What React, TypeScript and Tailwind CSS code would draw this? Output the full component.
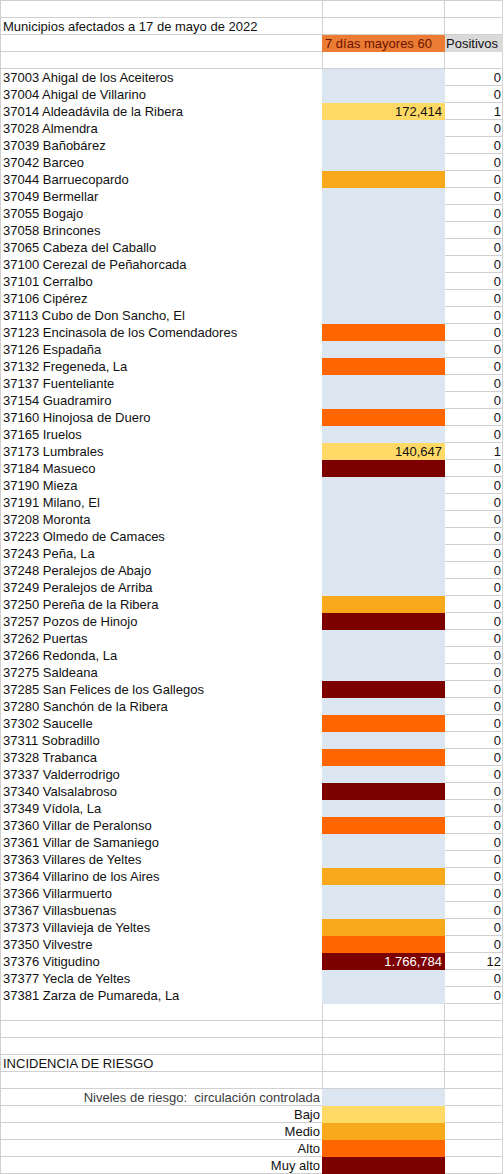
import React from "react";

type Lvl = "b" | "y" | "a" | "o" | "r";

const fillCls: Record<Lvl, string> = {
  b: "bg-[#dce6f1]",
  y: "bg-[#ffd966]",
  a: "bg-[#f7a81b]",
  o: "bg-[#ff6600]",
  r: "bg-[#7d0000]",
};

const data: [string, Lvl, string?, string?][] = [
  ["37003 Ahigal de los Aceiteros", "b"],
  ["37004 Ahigal de Villarino", "b"],
  ["37014 Aldeadávila de la Ribera", "y", "172,414", "1"],
  ["37028 Almendra", "b"],
  ["37039 Bañobárez", "b"],
  ["37042 Barceo", "b"],
  ["37044 Barruecopardo", "a"],
  ["37049 Bermellar", "b"],
  ["37055 Bogajo", "b"],
  ["37058 Brincones", "b"],
  ["37065 Cabeza del Caballo", "b"],
  ["37100 Cerezal de Peñahorcada", "b"],
  ["37101 Cerralbo", "b"],
  ["37106 Cipérez", "b"],
  ["37113 Cubo de Don Sancho, El", "b"],
  ["37123 Encinasola de los Comendadores", "o"],
  ["37126 Espadaña", "b"],
  ["37132 Fregeneda, La", "o"],
  ["37137 Fuenteliante", "b"],
  ["37154 Guadramiro", "b"],
  ["37160 Hinojosa de Duero", "o"],
  ["37165 Iruelos", "b"],
  ["37173 Lumbrales", "y", "140,647", "1"],
  ["37184 Masueco", "r"],
  ["37190 Mieza", "b"],
  ["37191 Milano, El", "b"],
  ["37208 Moronta", "b"],
  ["37223 Olmedo de Camaces", "b"],
  ["37243 Peña, La", "b"],
  ["37248 Peralejos de Abajo", "b"],
  ["37249 Peralejos de Arriba", "b"],
  ["37250 Pereña de la Ribera", "a"],
  ["37257 Pozos de Hinojo", "r"],
  ["37262 Puertas", "b"],
  ["37266 Redonda, La", "b"],
  ["37275 Saldeana", "b"],
  ["37285 San Felices de los Gallegos", "r"],
  ["37280 Sanchón de la Ribera", "b"],
  ["37302 Saucelle", "o"],
  ["37311 Sobradillo", "b"],
  ["37328 Trabanca", "o"],
  ["37337 Valderrodrigo", "b"],
  ["37340 Valsalabroso", "r"],
  ["37349 Vídola, La", "b"],
  ["37360 Villar de Peralonso", "o"],
  ["37361 Villar de Samaniego", "b"],
  ["37363 Villares de Yeltes", "b"],
  ["37364 Villarino de los Aires", "a"],
  ["37366 Villarmuerto", "b"],
  ["37367 Villasbuenas", "b"],
  ["37373 Villavieja de Yeltes", "a"],
  ["37350 Vilvestre", "o"],
  ["37376 Vitigudino", "r", "1.766,784", "12"],
  ["37377 Yecla de Yeltes", "b"],
  ["37381 Zarza de Pumareda, La", "b"],
];

const G = "border-[#d0d0d0]";

function PlainRow({ text }: { text?: string }) {
  return (
    <div className="flex h-[17px]">
      <div className={`w-[322px] h-[17px] border-l border-b ${G} pl-[2px] pt-px leading-4 whitespace-nowrap`}>
        {text}
      </div>
      <div className={`w-[123px] h-[17px] border-l border-r border-b ${G}`} />
      <div className={`w-[58px] h-[17px] border-r border-b ${G}`} />
    </div>
  );
}

export default function App() {
  return (
    <div
      className="w-[504px] h-[1174px] bg-white text-[13px] text-[#111] overflow-hidden"
      style={{ fontFamily: '"Liberation Sans", Arial, sans-serif' }}
    >
      <div className={`border-t ${G} w-[503px]`}>
        <PlainRow />
        <PlainRow text="Municipios afectados a 17 de mayo de 2022" />
        <div className="flex h-[17px]">
          <div className={`w-[322px] h-[17px] border-l border-b ${G}`} />
          <div className="w-[123px] h-[17px] bg-[#ec7c34] pl-[3px] pt-px leading-4 text-[#6a1400] whitespace-nowrap">
            7 días mayores 60
          </div>
          <div className="w-[58px] h-[17px] bg-[#dadada] pl-[1px] pt-px leading-4 whitespace-nowrap">
            Positivos
          </div>
        </div>
        <PlainRow />
        {data.map(([name, lvl, val, pos]) => (
          <div key={name} className="flex h-[17px]">
            <div className={`w-[322px] h-[17px] border-l ${G} pl-[2px] pt-px leading-4 whitespace-nowrap`}>
              {name}
            </div>
            <div
              className={`w-[123px] h-[17px] ${fillCls[lvl]} pr-[3px] pt-px leading-4 text-right whitespace-nowrap ${
                lvl === "r" ? "text-white" : "text-[#111]"
              }`}
            >
              {val}
            </div>
            <div className={`w-[58px] h-[17px] border-r border-b ${G} pr-[1px] pt-px leading-4 text-right`}>
              {pos ?? "0"}
            </div>
          </div>
        ))}
        <PlainRow />
        <PlainRow />
        <PlainRow />
        <PlainRow text="INCIDENCIA DE RIESGO" />
        <PlainRow />
        {(
          [
            ["Niveles de riesgo:  circulación controlada", "b"],
            ["Bajo", "y"],
            ["Medio", "a"],
            ["Alto", "o"],
            ["Muy alto", "r"],
          ] as [string, Lvl][]
        ).map(([label, lvl], i) => (
          <div key={label} className="flex h-[17px]">
            <div
              className={`w-[322px] h-[17px] border-l border-b ${G} pr-[2px] pt-px leading-4 text-right whitespace-pre ${
                i === 0 ? "text-[#3a3a3a]" : "text-[#111]"
              }`}
            >
              {label}
            </div>
            <div className={`w-[123px] h-[17px] ${fillCls[lvl]}`} />
            <div className={`w-[58px] h-[17px] border-r border-b ${G}`} />
          </div>
        ))}
      </div>
    </div>
  );
}
